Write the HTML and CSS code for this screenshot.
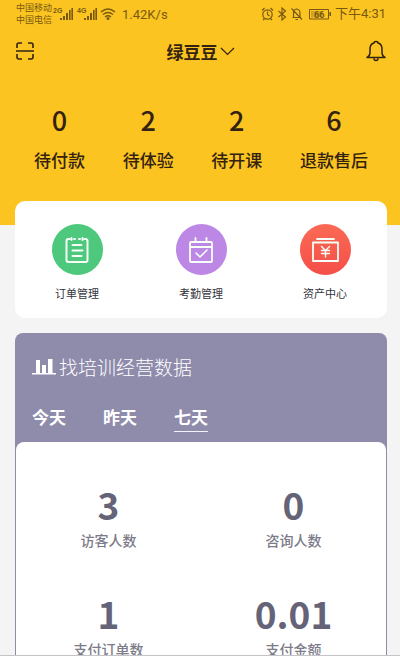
FILE: index.html
```html
<!DOCTYPE html>
<html lang="zh-CN">
<head>
<meta charset="utf-8">
<meta name="viewport" content="width=device-width, initial-scale=1">
<title>绿豆豆</title>
<link rel="stylesheet" href="styles.css">
</head>
<body>
<div class="screen">
  <main class="content">
    <header class="hero">
      <div class="status">
        <div class="carriers"><span>中国移动</span><span>中国电信</span></div>
        <svg class="signals" width="64" height="16" viewBox="0 0 64 16" aria-hidden="true">
          <g fill="currentColor">
            <path d="M7 12h2v2H7zM10 10h2v4h-2zM13 7h2v7h-2zM16 4h1.600v10H16zM18.400 2H20v12h-1.600z"/>
            <path d="M31 12h2v2h-2zM34 10h2v4h-2zM37 7h2v7h-2zM40 4h1.600v10H40zM42.400 2H44v12h-1.600z"/>
            <text x="0" y="7" class="net">2G</text>
            <text x="24" y="7" class="net">4G</text>
            <circle cx="55" cy="12.500" r="1.500"/>
          </g>
          <path d="M48 6q7-6 14 0M50 8.500q5-4 10 0M52 11q3-2.500 6 0" fill="none" stroke="currentColor" stroke-width="1.400"/>
        </svg>
        <span class="speed">1.42K/s</span>
        <svg class="indicators" width="70" height="16" viewBox="0 0 70 16" aria-hidden="true">
          <g fill="none" stroke="currentColor" stroke-width="1.200">
            <circle cx="6.500" cy="8.500" r="4.700"/><path d="M6.500 5.500v3l2 1.500M1 4.500L3.500 2M12 4.500L9.500 2M3.500 12.500L2 14M9.500 12.500l1.500 1.500"/>
            <path d="M17.500 5l7 6-3.500 3V2l3.500 3-7 6"/>
            <path d="M31.500 11.500h8.500M32.500 11V7q0-3.500 3-4 3.500.500 3.500 4v4M34.500 13.500h2.500M30.500 2.500l10.500 11"/>
            <path d="M48.500 3.500h19v9.500h-19z" stroke-width="1"/>
          </g>
          <path d="M50 5h11v6.500H50z" fill="currentColor" opacity=".3"/>
          <path d="M68.500 6H70v4h-1.500z" fill="currentColor"/>
          <text x="53" y="11.500" class="level" fill="currentColor">66</text>
        </svg>
        <span class="time">下午4:31</span>
      </div>

      <nav class="topbar">
        <button class="icon-btn" type="button" aria-label="扫一扫">
          <svg width="20" height="20" viewBox="0 0 20 20" fill="none" stroke="currentColor" stroke-width="1.600">
            <path d="M2 7V4q0-2 2-2h3M13 2h3q2 0 2 2v3M2 13v3q0 2 2 2h3M13 18h3q2 0 2-2v-3M1 10h18"/>
          </svg>
        </button>
        <button class="shop" type="button">绿豆豆<svg width="15" height="9" viewBox="0 0 15 9" fill="none" stroke="currentColor" stroke-width="1.200"><path d="M1 1l6.500 6.500L14 1"/></svg></button>
        <button class="icon-btn" type="button" aria-label="通知">
          <svg width="20" height="22" viewBox="0 0 20 22" fill="none" stroke="currentColor" stroke-width="1.500" stroke-linejoin="round">
            <path d="M1 17.500q3-1.500 3-5V9q0-5 4-6 0-1.500 2-1.500T12 3q4 1 4 6v3.500q0 3.500 3 5zM8 18.500q0 2 2 2t2-2"/>
          </svg>
        </button>
      </nav>

      <ul class="orders">
        <li><strong>0</strong><span>待付款</span></li>
        <li><strong>2</strong><span>待体验</span></li>
        <li><strong>2</strong><span>待开课</span></li>
        <li><strong>6</strong><span>退款售后</span></li>
      </ul>
    </header>

    <section class="card shortcuts">
      <a href="#orders">
        <span class="disc green">
          <svg width="26" height="28" viewBox="0 0 26 28" fill="none" stroke="currentColor" stroke-width="2" stroke-linecap="round">
            <path d="M5.500 3H4.500Q2.500 3 2.500 5v19q0 2 2 2h17q2 0 2-2V5q0-2-2-2h-1M10 3h1M15 3h1M8.500 9h9M8.500 14.500h10M8.500 20h9M7.500 2v2M18.500 2v2"/>
          </svg>
        </span>
        <span>订单管理</span>
      </a>
      <a href="#attendance">
        <span class="disc purple">
          <svg width="26" height="28" viewBox="0 0 26 28" fill="none" stroke="currentColor" stroke-width="1.800" stroke-linecap="round" stroke-linejoin="round">
            <path d="M3 6h20q1 0 1 1v18q0 1-1 1H3q-1 0-1-1V7q0-1 1-1zM2 11h22M7.500 2v4M18.500 2v4"/><path d="M8 17l4 4 7-7" stroke-width="1.600"/>
          </svg>
        </span>
        <span>考勤管理</span>
      </a>
      <a href="#assets">
        <span class="disc red">
          <svg width="28" height="26" viewBox="0 0 28 26" fill="none" stroke="currentColor" stroke-width="1.800" stroke-linecap="round" stroke-linejoin="round">
            <path d="M6 2h17M2 5.500h25v18.500H2z"/><path d="M10.500 9.500l4 4 4-4M14.500 13.500V20M10.500 13.500h8M10.500 16.500h8" stroke-width="1.400"/>
          </svg>
        </span>
        <span>资产中心</span>
      </a>
    </section>

    <section class="data">
      <h2><svg width="24" height="18" viewBox="0 0 24 18" fill="currentColor" aria-hidden="true"><path d="M0 15h24v1.500H0zM4 2h4v13H4zM10 7h4v8h-4zM16 1h4.500v14H16z"/></svg>找培训经营数据</h2>
      <div class="tabs" role="tablist">
        <button type="button" role="tab" aria-selected="false">今天</button>
        <button type="button" role="tab" aria-selected="false">昨天</button>
        <button type="button" role="tab" aria-selected="true">七天</button>
      </div>
      <ul class="metrics">
        <li><strong>3</strong><span>访客人数</span></li>
        <li><strong>0</strong><span>咨询人数</span></li>
        <li><strong>1</strong><span>支付订单数</span></li>
        <li><strong>0.01</strong><span>支付金额</span></li>
      </ul>
    </section>
  </main>
  <footer class="edge"></footer>
</div>
</body>
</html>
```
FILE: styles.css
```css
* { box-sizing: border-box; }

body {
  margin: 0;
  font-family: "Noto Sans CJK SC", sans-serif;
  background: #fff;
}

ul { margin: 0; padding: 0; list-style: none; }
h2 { margin: 0; }
svg { display: block; flex: none; }
a { color: inherit; text-decoration: none; }

button {
  padding: 0;
  border: 0;
  background: none;
  color: inherit;
  font: inherit;
}

.screen {
  display: flex;
  flex-direction: column;
  height: 100vh;
}

.content {
  flex: 1;
  min-height: 0;
  overflow: hidden;
  background: #f4f4f5;
}

.edge {
  height: 6px;
  border-top: 1px solid #c4c4c8;
  background: #fff;
}

.hero {
  padding-bottom: 53px;
  background: #fbc421;
  color: #33220f;
}

.status {
  display: flex;
  align-items: center;
  height: 28px;
  padding: 0 14px 0 16px;
  color: #795814;
}

.carriers {
  display: flex;
  flex-direction: column;
  font-size: 9px;
  line-height: 12px;
}

.signals { margin-left: 1px; }
.net { font: bold 7px "Liberation Sans", sans-serif; }
.level { font: bold 9px "Roboto", sans-serif; }

.speed {
  margin-left: 5px;
  font: 13px "Roboto", sans-serif;
}

.indicators { margin-left: auto; }

.time {
  margin-left: 4px;
  font-family: "Roboto", "Noto Sans CJK SC", sans-serif;
  font-size: 13px;
  line-height: 16px;
}

.topbar {
  display: flex;
  align-items: center;
  justify-content: space-between;
  height: 46px;
  padding: 0 14px 0 15px;
}

.shop {
  display: flex;
  align-items: center;
  gap: 2px;
  font-size: 17px;
  font-weight: 700;
}

.orders {
  display: flex;
  justify-content: space-between;
  padding: 26px 32px 0 34px;
}

.orders li {
  display: flex;
  flex-direction: column;
  align-items: center;
  gap: 8px;
  font-size: 17px;
  font-weight: 500;
  line-height: 24px;
}

.orders strong {
  font-size: 27px;
  font-weight: 500;
  line-height: 40px;
}

.card {
  margin: -24px 13px 0 15px;
  border-radius: 10px;
  background: #fff;
}

.shortcuts {
  display: grid;
  grid-template-columns: repeat(3, 1fr);
  padding: 23px 0 16px;
}

.shortcuts a {
  display: flex;
  flex-direction: column;
  align-items: center;
  gap: 9px;
  color: #34343c;
  font-size: 11px;
  line-height: 18px;
}

.disc {
  display: grid;
  place-items: center;
  width: 51px;
  height: 51px;
  border-radius: 50%;
  color: #f6fff8;
}

.green { background: #4dc87c; }
.purple { background: #bd88e5; }
.red { background: linear-gradient(#fa6a55, #f54f48); }

.data {
  margin: 15px 13px 0 15px;
  padding: 20px 1px 0;
  border-radius: 8px;
  background: #8e8bab;
  color: #fff;
}

.data h2 {
  display: flex;
  align-items: center;
  gap: 3px;
  padding: 0 16px;
  font-size: 19px;
  font-weight: 300;
  line-height: 28px;
}

.tabs {
  display: flex;
  gap: 37px;
  padding: 22px 16px 10px;
  font-size: 17px;
  font-weight: 700;
  line-height: 28px;
}

.tabs button { border-bottom: 1px solid transparent; }
.tabs button[aria-selected="true"] { border-color: #f4f3fa; }

.metrics {
  display: grid;
  grid-template-columns: repeat(2, 1fr);
  row-gap: 37px;
  padding: 38px 0;
  border-radius: 8px 8px 0 0;
  background: #fff;
}

.metrics li {
  display: flex;
  flex-direction: column;
  align-items: center;
  color: #7c7b89;
  font-size: 14px;
  font-weight: 500;
  line-height: 24px;
}

.metrics strong {
  color: #646377;
  font-size: 37px;
  font-weight: 700;
  line-height: 48px;
}
```
